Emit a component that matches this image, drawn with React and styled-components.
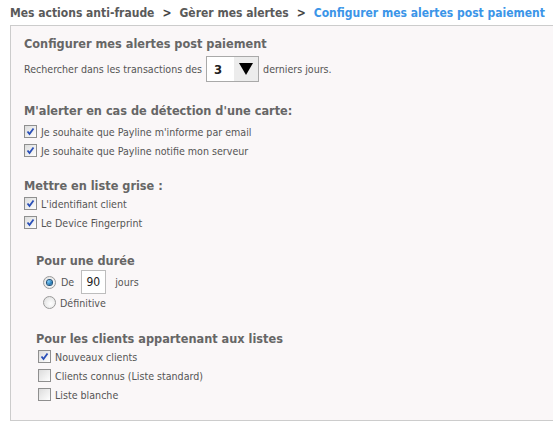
import React from 'react';
import styled, { createGlobalStyle } from 'styled-components';

const GlobalStyle = createGlobalStyle`
  html, body {
    margin: 0;
    padding: 0;
    background: #ffffff;
    overflow: hidden;
  }
`;

const Page = styled.div`
  width: 560px;
  padding-left: 10px;
  font-family: "DejaVu Sans Condensed", "DejaVu Sans", Tahoma, sans-serif;
  color: #555;
`;

const Breadcrumb = styled.div`
  display: flex;
  align-items: center;
  height: 25px;
  font-size: 12px;
  font-weight: 600;
  color: #5a5a5a;
  white-space: nowrap;
`;

const Crumb = styled.span`
  color: ${(p) => (p.$active ? '#3b95e8' : '#5a5a5a')};
`;

const Sep = styled.span`
  margin: 0 8px;
  color: #444;
`;

const Panel = styled.div`
  border: 1px solid #cccccc;
  border-right: none;
  background: #faf7f8;
  height: 396px;
  padding: 10px 0 0 13px;
  box-sizing: border-box;
`;

const Section = styled.div`
  margin-bottom: ${(p) => p.$gap || '18px'};
  padding-left: ${(p) => p.$indent || '0'};
`;

const Title = styled.div`
  font-size: 12.6px;
  font-weight: bold;
  color: #666;
  line-height: 16px;
  margin-bottom: ${(p) => p.$gap || '3px'};
`;

const Text = styled.span`
  font-size: 10.6px;
  color: #555;
`;

const Row = styled.label`
  display: flex;
  align-items: center;
  gap: 4px;
  height: 19px;
  font-size: 10.6px;
  color: #555;
  padding-left: ${(p) => p.$indent || '0'};
`;

const SearchRow = styled.div`
  display: flex;
  align-items: center;
  gap: 4px;
  height: 28px;
`;

const Select = styled.div`
  display: flex;
  align-items: center;
  width: 53px;
  height: 26px;
  box-sizing: border-box;
  border: 1px solid #a9a9a9;
  background: #fff;
`;

const SelectValue = styled.span`
  flex: 1;
  padding-left: 7px;
  font-size: 13px;
  font-weight: bold;
  color: #222;
`;

const SelectButton = styled.span`
  display: flex;
  align-items: center;
  justify-content: center;
  width: 24px;
  height: 24px;
  background: #ececec;
`;

const Box = styled.span`
  display: inline-flex;
  align-items: center;
  justify-content: center;
  width: 13px;
  height: 13px;
  box-sizing: border-box;
  border: 1px solid #8f8f8f;
  background: linear-gradient(135deg, #dcdcdc 0%, #f4f4f4 70%, #ffffff 100%);
  flex-shrink: 0;
`;

const Radio = styled.span`
  display: inline-flex;
  align-items: center;
  justify-content: center;
  width: 13px;
  height: 13px;
  box-sizing: border-box;
  border-radius: 50%;
  border: 1px solid #9a9a9a;
  background: radial-gradient(circle at 60% 60%, #ffffff 0%, #e2e2e2 80%);
  flex-shrink: 0;
`;

const Dot = styled.span`
  width: 5px;
  height: 5px;
  border-radius: 50%;
  background: radial-gradient(circle at 35% 35%, #7fd0ff 0%, #0a5f9e 80%);
  box-shadow: 0 0 0 1px #1e4f78;
`;

const NumberInput = styled.span`
  display: inline-flex;
  align-items: center;
  justify-content: flex-end;
  width: 25px;
  height: 24px;
  box-sizing: border-box;
  padding-right: 5px;
  border: 1px solid #bdbdbd;
  background: #fff;
  font-size: 12px;
  color: #222;
  margin: 0 4px 0 2px;
`;

const DurationRow = styled(Row)`
  height: 22px;
  gap: 5px;
`;

const Check = ({ checked }) => (
  <Box>
    {checked && (
      <svg width="9" height="9" viewBox="0 0 9 9">
        <path d="M1.5 4.5 L3.5 7 L7.5 1.5" fill="none" stroke="#2a4fb8" strokeWidth="1.8" />
      </svg>
    )}
  </Box>
);

const Option = ({ checked, children, indent }) => (
  <Row $indent={indent}>
    <Check checked={checked} />
    <span>{children}</span>
  </Row>
);

export default function App() {
  return (
    <Page>
      <GlobalStyle />
      <Breadcrumb>
        <Crumb>Mes actions anti-fraude</Crumb>
        <Sep>&gt;</Sep>
        <Crumb>Gèrer mes alertes</Crumb>
        <Sep>&gt;</Sep>
        <Crumb $active>Configurer mes alertes post paiement</Crumb>
      </Breadcrumb>
      <Panel>
        <Section $gap="20px">
          <Title>Configurer mes alertes post paiement</Title>
          <SearchRow>
            <Text>Rechercher dans les transactions des</Text>
            <Select>
              <SelectValue>3</SelectValue>
              <SelectButton>
                <svg width="14" height="12" viewBox="0 0 14 12">
                  <path d="M0 0 H14 L7 12 Z" fill="#000" />
                </svg>
              </SelectButton>
            </Select>
            <Text>derniers jours.</Text>
          </SearchRow>
        </Section>
        <Section $gap="18px">
          <Title>M'alerter en cas de détection d'une carte:</Title>
          <Option checked>Je souhaite que Payline m'informe par email</Option>
          <Option checked>Je souhaite que Payline notifie mon serveur</Option>
        </Section>
        <Section $gap="21px">
          <Title $gap="0px">Mettre en liste grise :</Title>
          <Option checked>L'identifiant client</Option>
          <Option checked>Le Device Fingerprint</Option>
        </Section>
        <Section $indent="12px" $gap="19px">
          <Title $gap="2px">Pour une durée</Title>
          <DurationRow $indent="7px">
            <Radio><Dot /></Radio>
            <span>De</span>
            <NumberInput>90</NumberInput>
            <span>jours</span>
          </DurationRow>
          <Row $indent="7px">
            <Radio />
            <span>Définitive</span>
          </Row>
        </Section>
        <Section $indent="12px">
          <Title $gap="0px">Pour les clients appartenant aux listes</Title>
          <Option checked indent="2px">Nouveaux clients</Option>
          <Option indent="2px">Clients connus (Liste standard)</Option>
          <Option indent="2px">Liste blanche</Option>
        </Section>
      </Panel>
    </Page>
  );
}
